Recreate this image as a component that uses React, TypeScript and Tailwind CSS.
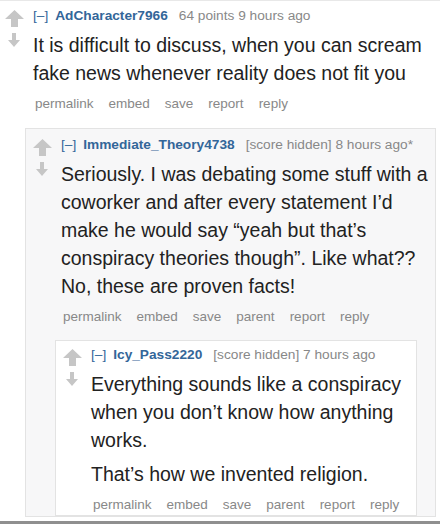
import { ReactNode } from 'react'

function UpArrow() {
    return (
        <svg width="19" height="17" viewBox="0 0 19 17" className="block">
            <polygon points="9.5,0 19,9 13,9 13,17 6,17 6,9 0,9" fill="#c6c6c6"/>
        </svg>
    )
}

function DownArrow() {
    return (
        <svg width="12" height="14" viewBox="0 0 12 14" className="block">
            <polygon points="4,0 8,0 8,7 12,7 6,14 0,7 4,7" fill="#c6c6c6"/>
        </svg>
    )
}

interface Properties {
    author: string
    meta: string
    buttons: string[]
    children: ReactNode
}

function Comment({author, meta, buttons, children}: Properties) {
    return (
        <div className="flex">
            {/* VOTE ARROWS */}
            <div className="w-[28px] shrink-0 flex flex-col pt-[4px]">
                <UpArrow/>
                <div className="pl-[3px] mt-[6px]">
                    <DownArrow/>
                </div>
            </div>

            {/* ENTRY */}
            <div className="flex-1 min-w-0">
                <div className="text-[13.7px] leading-[20px] whitespace-nowrap">
                    <span className="text-[#336699]">[–]</span>
                    <span className="ml-[7px] font-bold text-[#336699]">{author}</span>
                    <span className="ml-[11px] text-[#888888]">{meta}</span>
                </div>
                <div className="mt-[5px] text-[19.5px] leading-[28px] text-[#222222]">
                    {children}
                </div>
                <div className="mt-[7px] pl-[2px] flex gap-[15px] text-[13.5px] leading-[20px] text-[#888888]">
                    {buttons.map(b => <span key={b}>{b}</span>)}
                </div>
            </div>
        </div>
    )
}

export default function App() {
    return (
        <div className="w-[440px] h-[524px] overflow-hidden flex flex-col bg-white font-['Liberation_Sans',Arial,sans-serif]">
            <div className="flex-1 min-h-0 border-t border-t-[#e8e8e8]">

                {/*=================================*/}
                {/*TOP COMMENT*/}
                {/*=================================*/}
                <div className="pl-[5px] pt-[5px]">
                    <Comment author="AdCharacter7966" meta="64 points 9 hours ago" buttons={['permalink', 'embed', 'save', 'report', 'reply']}>
                        <p>It is difficult to discuss, when you can scream fake news whenever reality does not fit you</p>
                    </Comment>
                </div>

                {/*=================================*/}
                {/*REPLY*/}
                {/*=================================*/}
                <div className="ml-[25px] mr-[4px] mt-[14px] bg-[#f7f7f8] border border-[#e3e3e3] pl-[7px] pr-[5px] pt-[6px]">
                    <Comment author="Immediate_Theory4738" meta="[score hidden] 8 hours ago*" buttons={['permalink', 'embed', 'save', 'parent', 'report', 'reply']}>
                        <p>Seriously. I was debating some stuff with a coworker and after every statement I’d make he would say “yeah but that’s conspiracy theories though”. Like what?? No, these are proven facts!</p>
                    </Comment>

                    {/*=================================*/}
                    {/*NESTED REPLY*/}
                    {/*=================================*/}
                    <div className="ml-[22px] mr-[13px] mt-[13px] bg-white border border-[#e3e3e3] pl-[7px] pr-[8px] pt-[4px]">
                        <Comment author="Icy_Pass2220" meta="[score hidden] 7 hours ago" buttons={['permalink', 'embed', 'save', 'parent', 'report', 'reply']}>
                            <p>Everything sounds like a conspiracy when you don’t know how anything works.</p>
                            <p className="mt-[6px]">That’s how we invented religion.</p>
                        </Comment>
                    </div>
                </div>
            </div>
            <div className="h-[3px] bg-[#8f8f8f] shrink-0"/>
        </div>
    )
}
